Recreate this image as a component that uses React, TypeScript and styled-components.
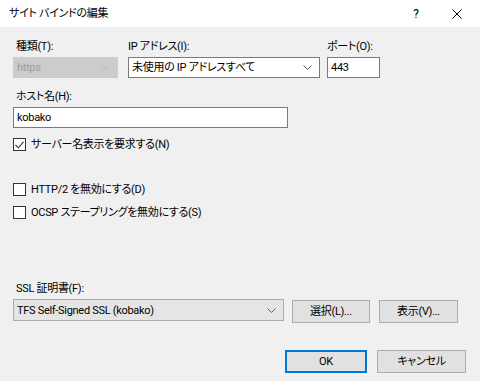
import React from "react";
import styled, { createGlobalStyle } from "styled-components";

const GlobalStyle = createGlobalStyle`
  html, body {
    margin: 0;
    padding: 0;
    background: #f0f0f0;
  }
  body {
    font-family: Roboto, "Noto Sans CJK JP", sans-serif;
    font-feature-settings: "palt";
    font-size: 11px;
    letter-spacing: -0.3px;
    color: #000;
  }
`;

const Window = styled.div`
  width: 480px;
  height: 381px;
  background: #f0f0f0;
  display: flex;
  flex-direction: column;
  overflow: hidden;
`;

const TitleBar = styled.div`
  height: 27px;
  background: #fff;
  display: flex;
  align-items: center;
  padding-left: 9px;
  flex-shrink: 0;
`;

const Title = styled.div`
  flex: 1;
  line-height: 16px;
`;

const TitleButton = styled.div<{ $w: number }>`
  width: ${(p) => p.$w}px;
  height: 27px;
  display: flex;
  align-items: center;
  justify-content: center;
  font-size: 12px;
`;

const Body = styled.div`
  flex: 1;
  padding: 13px 14px 0 13px;
  display: flex;
  flex-direction: column;
`;

const Row = styled.div<{ $gap?: number; $mt?: number }>`
  display: flex;
  align-items: flex-start;
  gap: ${(p) => p.$gap ?? 0}px;
  margin-top: ${(p) => p.$mt ?? 0}px;
`;

const Field = styled.div<{ $w: number }>`
  width: ${(p) => p.$w}px;
  display: flex;
  flex-direction: column;
`;

const Label = styled.div<{ $flush?: boolean }>`
  height: 14px;
  line-height: 14px;
  margin-bottom: 3px;
  padding-left: ${(p) => (p.$flush ? 0 : 3)}px;
  white-space: nowrap;
`;

const Box = styled.div<{ $variant?: "disabled" | "input" | "combo" }>`
  height: 21px;
  box-sizing: border-box;
  border: 1px solid
    ${(p) =>
      p.$variant === "disabled"
        ? "#cccccc"
        : p.$variant === "combo"
        ? "#adadad"
        : "#7a7a7a"};
  background: ${(p) =>
    p.$variant === "disabled"
      ? "#cccccc"
      : p.$variant === "combo"
      ? "#e5e5e5"
      : "#ffffff"};
  color: ${(p) => (p.$variant === "disabled" ? "#9a9a9a" : "#000")};
  display: flex;
  align-items: center;
  padding: 0 3px;
  white-space: nowrap;
`;

const BoxText = styled.span`
  flex: 1;
  line-height: 17px;
`;

const Chevron = styled.svg`
  width: 9px;
  height: 5px;
  margin-right: 4px;
  flex-shrink: 0;
`;

const CheckRow = styled.div<{ $mt: number }>`
  display: flex;
  align-items: center;
  gap: 5px;
  margin-top: ${(p) => p.$mt}px;
  height: 13px;
  line-height: 16px;
  white-space: nowrap;
`;

const CheckBox = styled.span`
  width: 13px;
  height: 13px;
  box-sizing: border-box;
  border: 1px solid #333;
  background: #fff;
  display: flex;
  align-items: center;
  justify-content: center;
  flex-shrink: 0;
`;

const Button = styled.button<{ $w: number; $default?: boolean }>`
  width: ${(p) => p.$w}px;
  height: 23px;
  box-sizing: border-box;
  border: ${(p) => (p.$default ? "2px solid #0078d7" : "1px solid #adadad")};
  background: #e1e1e1;
  font-family: inherit;
  font-feature-settings: "palt";
  font-size: 11px;
  letter-spacing: -0.3px;
  color: #000;
  padding: 0;
  line-height: 16px;
`;

const SslRow = styled.div`
  display: flex;
  align-items: flex-start;
  gap: 8px;

  & > button {
    margin-top: 1px;
  }
`;

const Footer = styled.div`
  display: flex;
  justify-content: flex-end;
  gap: 10px;
  margin-top: 27px;
`;

const ChevronIcon: React.FC<{ color: string }> = ({ color }) => (
  <Chevron viewBox="0 0 9 5">
    <polyline points="0.5,0.5 4.5,4.5 8.5,0.5" fill="none" stroke={color} strokeWidth="1" />
  </Chevron>
);

const Check: React.FC<{ checked?: boolean }> = ({ checked }) => (
  <CheckBox>
    {checked && (
      <svg width="9" height="8" viewBox="0 0 9 8">
        <polyline points="0.5,4 3.3,6.8 8.5,0.8" fill="none" stroke="#333" strokeWidth="1.1" />
      </svg>
    )}
  </CheckBox>
);

export default function App() {
  return (
    <>
      <GlobalStyle />
      <Window>
        <TitleBar>
          <Title>サイト バインドの編集</Title>
          <TitleButton $w={36}>?</TitleButton>
          <TitleButton $w={46}>
            <svg width="10" height="10" viewBox="0 0 10 10">
              <path d="M0.5 0.5 L9.5 9.5 M9.5 0.5 L0.5 9.5" stroke="#000" strokeWidth="1" />
            </svg>
          </TitleButton>
        </TitleBar>
        <Body>
          <Row $gap={10}>
            <Field $w={105}>
              <Label>種類(T):</Label>
              <Box $variant="disabled">
                <BoxText>https</BoxText>
                <ChevronIcon color="#b8b8b8" />
              </Box>
            </Field>
            <Field $w={192}>
              <Label $flush>IP アドレス(I):</Label>
              <Box $variant="input">
                <BoxText>未使用の IP アドレスすべて</BoxText>
                <ChevronIcon color="#606060" />
              </Box>
            </Field>
            <Field $w={53} style={{ marginLeft: -3 }}>
              <Label $flush>ポート(O):</Label>
              <Box $variant="input">
                <BoxText>443</BoxText>
              </Box>
            </Field>
          </Row>
          <Row $mt={12}>
            <Field $w={275}>
              <Label>ホスト名(H):</Label>
              <Box $variant="input">
                <BoxText>kobako</BoxText>
              </Box>
            </Field>
          </Row>
          <CheckRow $mt={10}>
            <Check checked />
            サーバー名表示を要求する(N)
          </CheckRow>
          <CheckRow $mt={32}>
            <Check />
            HTTP/2 を無効にする(D)
          </CheckRow>
          <CheckRow $mt={10}>
            <Check />
            OCSP ステープリングを無効にする(S)
          </CheckRow>
          <Row $mt={63}>
            <Field $w={271}>
              <Label>SSL 証明書(F):</Label>
            </Field>
          </Row>
          <SslRow>
            <Field $w={271}>
              <Box $variant="combo" style={{ height: 22 }}>
                <BoxText>TFS Self-Signed SSL (kobako)</BoxText>
                <ChevronIcon color="#606060" />
              </Box>
            </Field>
            <Button $w={78}>選択(L)...</Button>
            <Button $w={79} style={{ marginLeft: 1 }}>
              表示(V)...
            </Button>
          </SslRow>
          <Footer>
            <Button $w={82} $default>
              OK
            </Button>
            <Button $w={89}>キャンセル</Button>
          </Footer>
        </Body>
      </Window>
    </>
  );
}
